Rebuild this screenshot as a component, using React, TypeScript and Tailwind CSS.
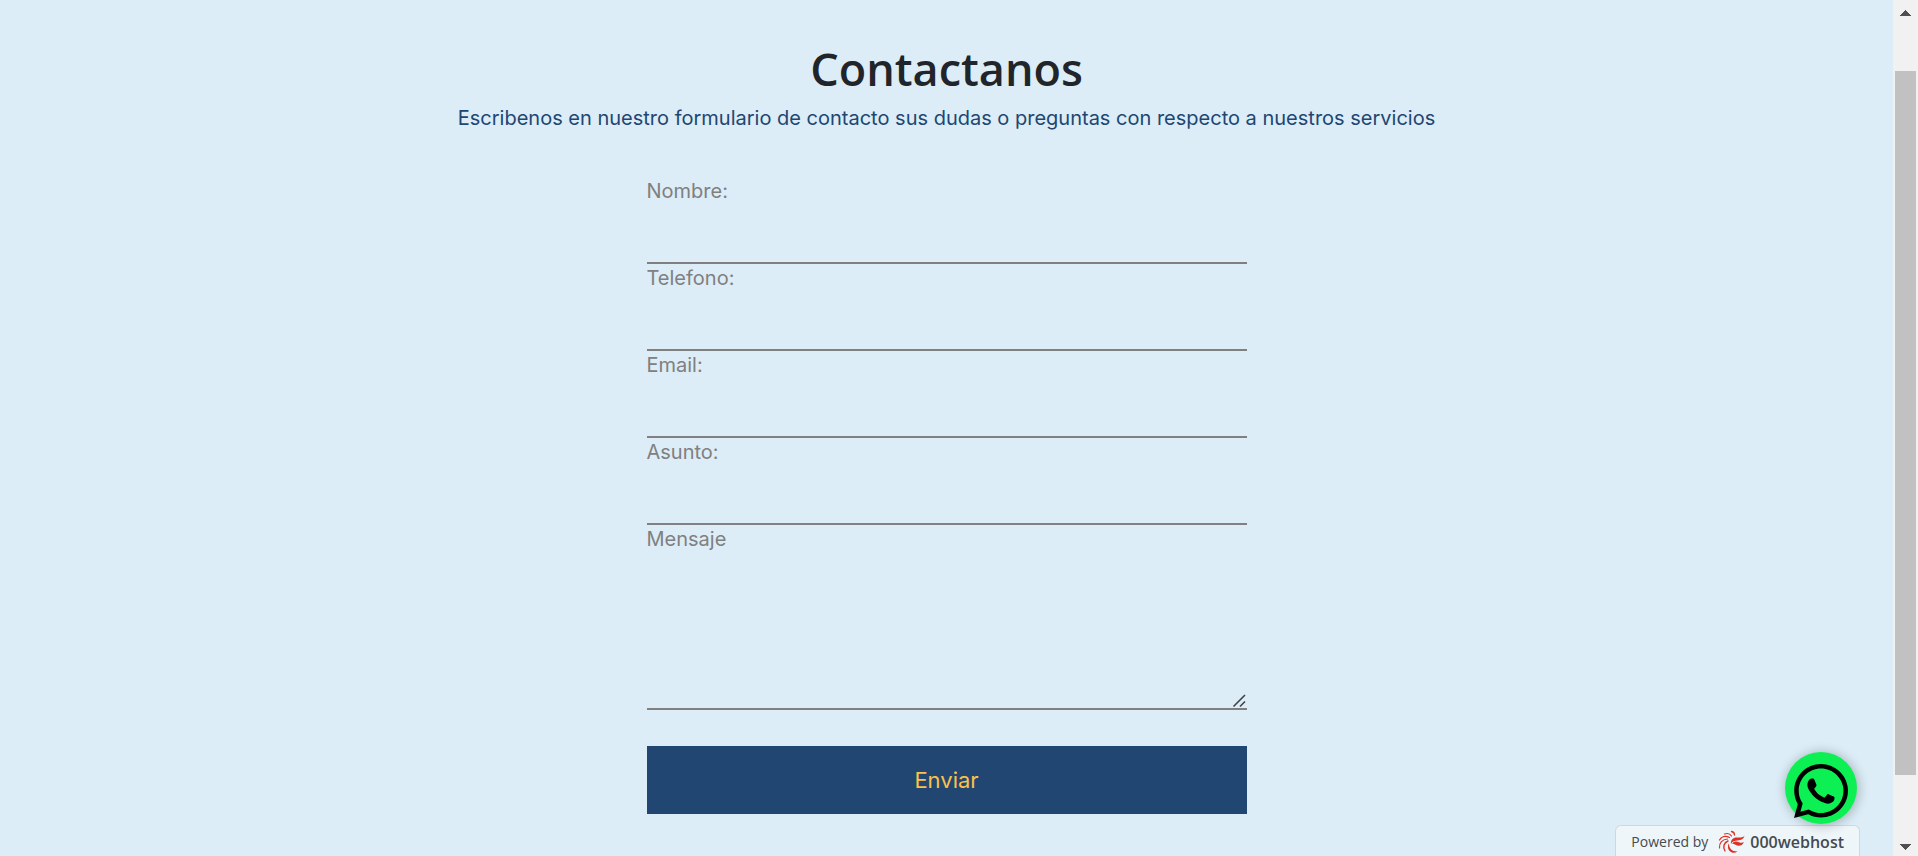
import type { InputHTMLAttributes } from "react";
import { FaWhatsapp } from "react-icons/fa6";

const labelClass = "block text-[20px] leading-[28px] font-normal text-[#808080]";
const boxClass =
  "block w-full border-0 border-b-2 border-[#808080] bg-transparent text-[20px] text-[#808080] outline-none";

type FieldProps = InputHTMLAttributes<HTMLInputElement> & { id: string; label: string };

function Field({ id, label, ...rest }: FieldProps) {
  return (
    <div>
      <label htmlFor={id} className={labelClass}>
        {label}
      </label>
      <input id={id} name={id} className={boxClass + " h-[59px]"} {...rest} />
    </div>
  );
}

function HostLogo() {
  return (
    <svg viewBox="0 0 28 24" className="h-6 w-7" aria-hidden="true">
      <g fill="#dc3226">
        <path d="M27.500 6C26 11 21 10 17.500 11C15.500 11.600 14.500 13 14 14C13.500 10 16 7.500 19.500 7.500C22.500 7.500 25 8 27.500 6Z" />
        <path d="M27 12C25 16.500 21 16.500 18 14.500C17 14 16 13.600 15 14C16.500 11 19.500 11 22 12.200C24 13 25.500 13 27 12Z" />
        <path d="M20.500 21.500C16 24.500 10.500 21.500 11 16C11.100 15 11.500 14 12 13.500C12 18 14.500 21.500 20.500 21.500Z" />
      </g>
      <g fill="none" stroke="#dc3226" strokeLinecap="round">
        <path d="M8 21C5.500 17 7 12.500 11 11" strokeWidth="1.4" />
        <path d="M2.500 18C2 13 5 9.500 10.500 9" strokeWidth="1.200" />
        <path d="M2.500 10C4.500 6.500 8.500 5.500 12.500 7.500" strokeWidth="1.200" />
        <path d="M7.500 4C10.500 3 13 3.500 14.500 6" strokeWidth="1.200" />
        <path d="M14.500 1.500C16.500 1.800 17.500 3 17.500 5" strokeWidth="1.300" />
      </g>
    </svg>
  );
}

function ScrollTrack() {
  return (
    <div aria-hidden="true" className="sticky top-0 flex h-screen w-[25px] shrink-0 flex-col items-center bg-[#f1f1f1]">
      <svg viewBox="0 0 11 6" className="mt-[10px] h-[6px] w-[11px] shrink-0" shapeRendering="crispEdges">
        <path d="M0 6L5.500 0L11 6Z" fill="#505050" />
      </svg>
      <div className="mt-[55px] mb-[69px] w-[21px] grow bg-[#c1c1c1]" />
      <svg viewBox="0 0 11 6" className="mb-[6px] h-[6px] w-[11px] shrink-0" shapeRendering="crispEdges">
        <path d="M0 0L5.500 6L11 0Z" fill="#505050" />
      </svg>
    </div>
  );
}

export default function App() {
  return (
    <div className="flex min-h-screen bg-[#dcedf7] font-['Inter','Liberation_Sans',sans-serif]">
      <main className="flex min-w-0 grow flex-col items-center px-4 pt-10 pb-10">
        <h1 className="text-center font-['Open_Sans','Noto_Sans',sans-serif] text-[45px] leading-[58px] font-semibold text-[#212529]">
          Contactanos
        </h1>
        <p className="mt-[5px] text-center text-[20px] leading-[30px] font-normal text-[#214672]">
          Escribenos en nuestro formulario de contacto sus dudas o preguntas con respecto a nuestros servicios
        </p>
        <form className="mt-11 w-full max-w-[600px]" onSubmit={(e) => e.preventDefault()}>
          <Field id="nombre" label="Nombre:" type="text" />
          <Field id="telefono" label="Telefono:" type="tel" />
          <Field id="email" label="Email:" type="email" />
          <Field id="asunto" label="Asunto:" type="text" />
          <label htmlFor="mensaje" className={labelClass}>
            Mensaje
          </label>
          <div className="relative">
            <textarea id="mensaje" name="mensaje" className={boxClass + " h-[157px] resize-y"} />
            <svg
              viewBox="0 0 15 15"
              className="pointer-events-none absolute right-0 bottom-[2px] h-[15px] w-[15px] bg-[#dcedf7]"
              aria-hidden="true"
            >
              <path d="M1.500 13.500L13 2M8 13.500L13 8.500" stroke="#3f464a" strokeWidth="1.600" fill="none" />
            </svg>
          </div>
          <button type="submit" className="mt-9 block h-[68px] w-full bg-[#214672] text-[22px] text-[#fbc14b]">
            Enviar
          </button>
        </form>
      </main>
      <ScrollTrack />

      <a
        href="https://000webhost.com"
        className="fixed right-[58px] bottom-0 flex h-[31px] items-center rounded-t-md border border-b-0 border-[#cfd8de] bg-[#eff6fa] px-[15px] pt-[2px] font-['Open_Sans','Noto_Sans',sans-serif] text-[16px] leading-5 text-[#444a4f]"
      >
        <span className="text-[14px]">Powered by</span>
        <span className="mr-[5px] ml-[9px]">
          <HostLogo />
        </span>
        <span className="font-semibold">000webhost</span>
      </a>
      <a
        href="https://wa.me/"
        aria-label="WhatsApp"
        className="fixed right-[61px] bottom-8 flex h-[72px] w-[72px] items-center justify-center rounded-full bg-[#0df053] pt-[6px] text-black shadow-[1px_1px_12px_rgba(0,0,0,0.3)]"
      >
        <FaWhatsapp className="h-[62px] w-[54px]" />
      </a>
    </div>
  );
}
